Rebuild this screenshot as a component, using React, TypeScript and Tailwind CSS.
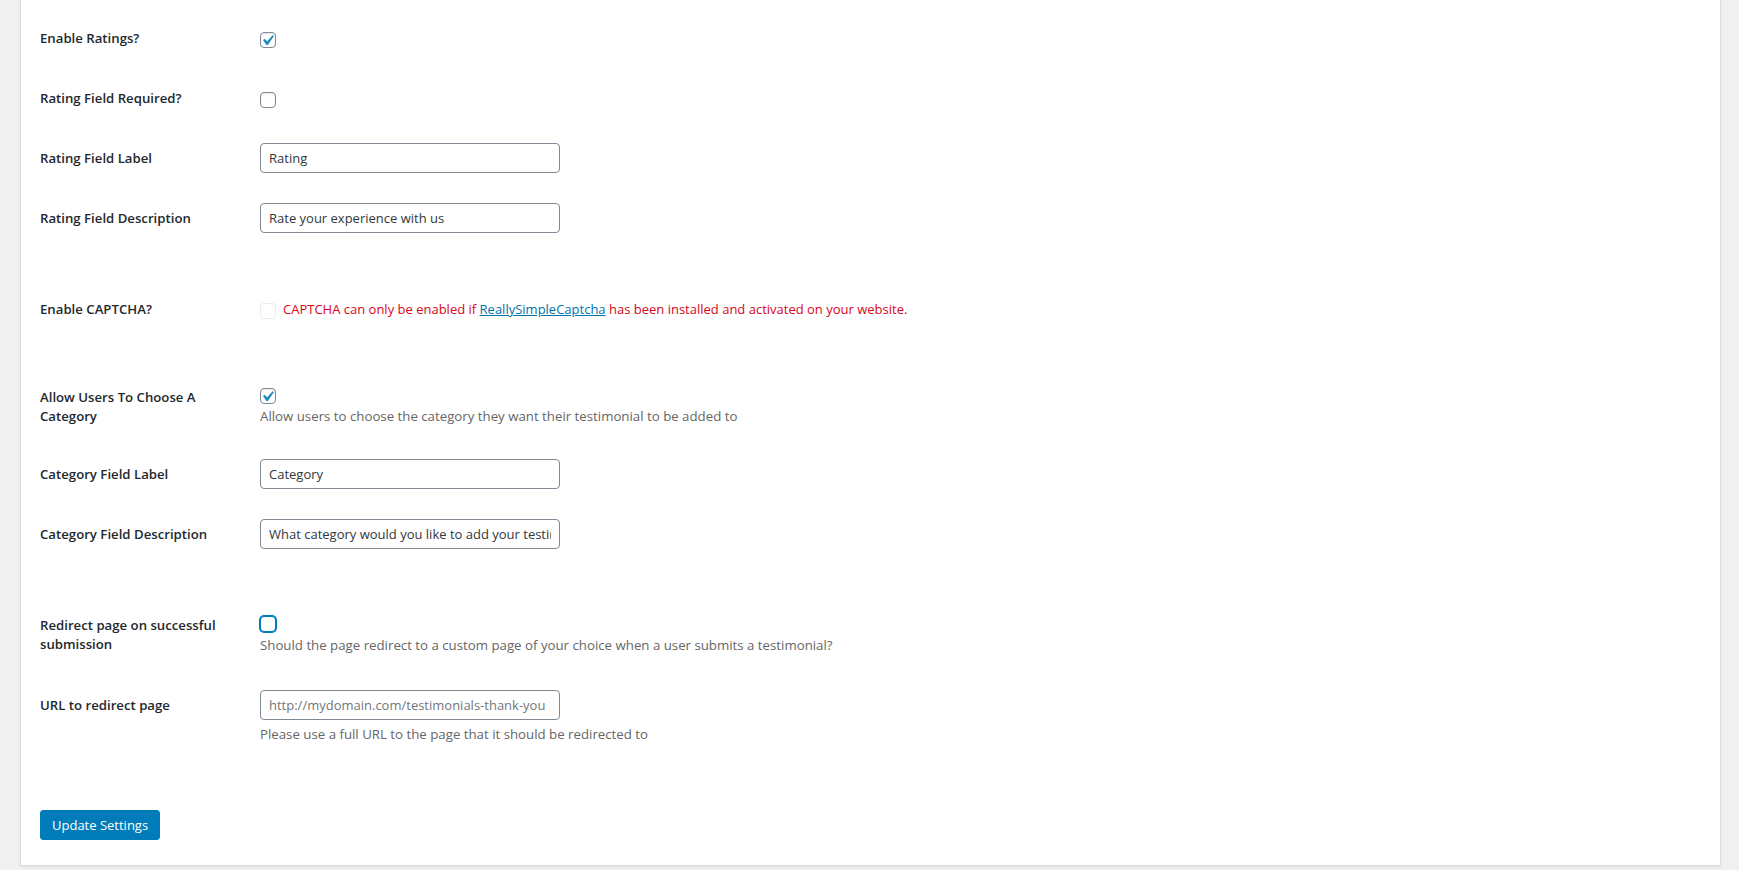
import React from "react";

const CheckMark = () => (
  <svg viewBox="0 0 20 20" className="absolute left-[-4px] top-[-3px] w-[21px] h-[21px]">
    <path d="M14.83 4.89l1.34.94-5.81 8.38H9.02L5.78 9.67l1.34-1.25 2.57 2.4z" fill="#1e8cbe" />
  </svg>
);

type BoxProps = { checked?: boolean; disabled?: boolean; focused?: boolean };

const Checkbox = ({ checked, disabled, focused }: BoxProps) => {
  let look = "border-[#7e8993] bg-white shadow-[inset_0_1px_2px_rgba(0,0,0,0.1)]";
  if (disabled) look = "border-[#dcdcde]/75 bg-white/50 opacity-70";
  if (focused) look = "border-[#007cba] bg-white shadow-[0_0_0_1px_#007cba]";
  return (
    <span className={`relative block w-4 h-4 shrink-0 rounded-[4px] border ${look}`}>
      {checked && <CheckMark />}
    </span>
  );
};

const Label = ({ children }: { children: React.ReactNode }) => (
  <div className="w-[220px] shrink-0 pt-[21px] pr-[10px] text-[13.2px] font-semibold leading-[19px] text-[#23282d]">
    {children}
  </div>
);

const TextInput = ({ value, placeholder }: { value?: string; placeholder?: string }) => (
  <input
    type="text"
    defaultValue={value}
    placeholder={placeholder}
    className="block w-[300px] h-[30px] rounded-[4px] border border-[#7e8993] bg-white px-[8px] text-[13px] text-[#32373c] placeholder:text-[#72777c] outline-none font-['Open_Sans',sans-serif]"
  />
);

const Description = ({ children, className = "" }: { children: React.ReactNode; className?: string }) => (
  <p className={`text-[13.25px] leading-[18px] text-[#666] ${className}`}>{children}</p>
);

export default function App() {
  return (
    <div className="h-[870px] overflow-hidden bg-[#f0f0f1] pl-[20px] pr-[18px] font-['Open_Sans',sans-serif] text-[13px]">
      <div className="h-[866px] border-x border-b border-[#dcdcde] bg-white pl-[19px] pt-[8px] shadow-[0_1px_2px_rgba(0,0,0,0.06)]">
        {/* ratings */}
        <div className="flex h-[60px]">
          <Label>Enable Ratings?</Label>
          <div className="pt-[24px]">
            <Checkbox checked />
          </div>
        </div>
        <div className="flex h-[60px]">
          <Label>Rating Field Required?</Label>
          <div className="pt-[24px]">
            <Checkbox />
          </div>
        </div>
        <div className="flex h-[60px]">
          <Label>Rating Field Label</Label>
          <div className="pt-[15px]">
            <TextInput value="Rating" />
          </div>
        </div>
        <div className="flex h-[60px]">
          <Label>Rating Field Description</Label>
          <div className="pt-[15px]">
            <TextInput value="Rate your experience with us" />
          </div>
        </div>

        {/* captcha */}
        <div className="mt-[31px] flex h-[60px]">
          <Label>Enable CAPTCHA?</Label>
          <div className="flex items-start gap-[7px] pt-[21px]">
            <span className="mt-[3px]">
              <Checkbox disabled />
            </span>
            <span className="leading-[19px] text-[#d9061a]">
              CAPTCHA can only be enabled if{" "}
              <a href="#" className="text-[#0073aa] underline">
                ReallySimpleCaptcha
              </a>{" "}
              has been installed and activated on your website.
            </span>
          </div>
        </div>

        {/* categories */}
        <div className="mt-[28px] flex h-[77px]">
          <Label>
            Allow Users To Choose A<br />
            Category
          </Label>
          <div className="pt-[21px]">
            <Checkbox checked />
            <Description className="mt-[3px]">
              Allow users to choose the category they want their testimonial to be added to
            </Description>
          </div>
        </div>
        <div className="flex h-[60px]">
          <Label>Category Field Label</Label>
          <div className="pt-[15px]">
            <TextInput value="Category" />
          </div>
        </div>
        <div className="flex h-[60px]">
          <Label>Category Field Description</Label>
          <div className="pt-[15px]">
            <TextInput value="What category would you like to add your testimonial to?" />
          </div>
        </div>

        {/* redirect */}
        <div className="mt-[31px] flex h-[80px]">
          <Label>
            Redirect page on successful
            <br />
            submission
          </Label>
          <div className="pt-[21px]">
            <Checkbox focused />
            <Description className="mt-[4px]">
              Should the page redirect to a custom page of your choice when a user submits a testimonial?
            </Description>
          </div>
        </div>
        <div className="flex h-[83px]">
          <Label>URL to redirect page</Label>
          <div className="pt-[15px]">
            <TextInput placeholder="http://mydomain.com/testimonials-thank-you" />
            <Description className="mt-[5px]">Please use a full URL to the page that it should be redirected to</Description>
          </div>
        </div>

        <button
          type="button"
          className="mt-[52px] h-[30px] rounded-[3px] border border-[#007cba] bg-[#007cba] px-[11px] text-[13px] leading-[28px] text-white"
        >
          Update Settings
        </button>
      </div>
    </div>
  );
}
